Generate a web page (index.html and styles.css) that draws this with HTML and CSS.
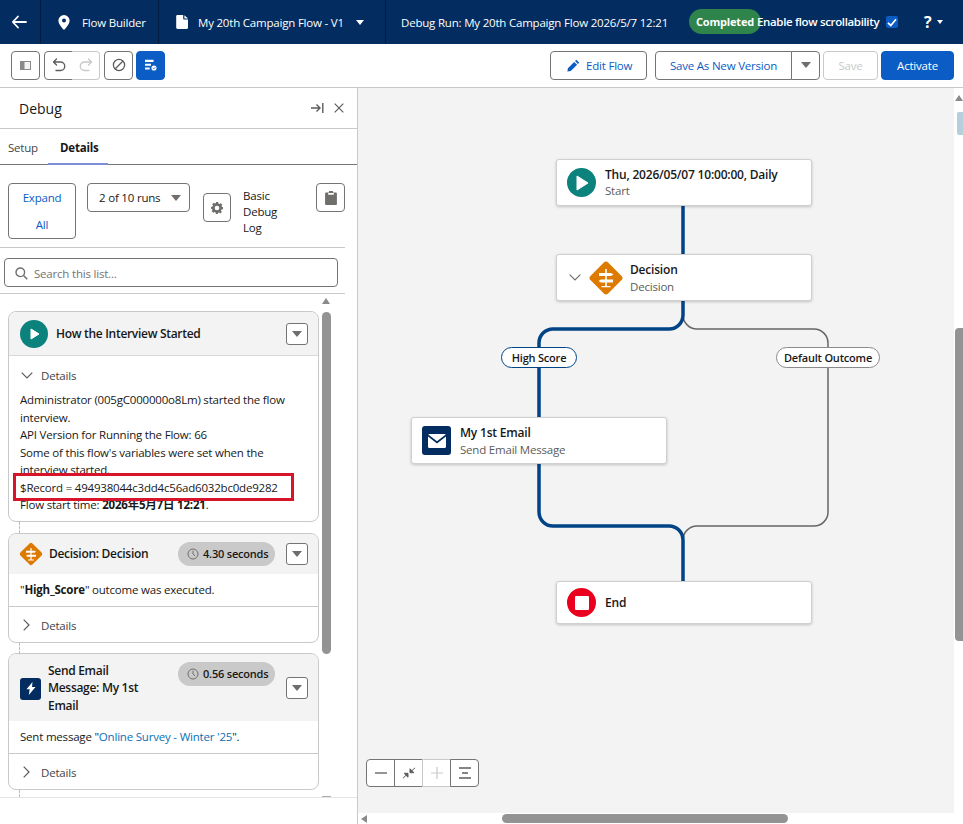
FILE: index.html
```html
<!DOCTYPE html>
<html lang="en">
<head>
    <meta charset="UTF-8">
    <title>Flow Builder - Debug Run</title>
    <link rel="stylesheet" href="styles.css">
</head>
<body>
    <header class="topbar">
        <a class="top-back">
            <svg width="16" height="14" viewBox="0 0 16 14"><path d="M7 1.5 1.8 7 7 12.5M2 7h13" fill="none" stroke="#fff" stroke-width="1.8" stroke-linecap="round" stroke-linejoin="round"/></svg>
        </a>
        <div class="top-app">
            <svg width="12" height="15" viewBox="0 0 12 15"><path fill-rule="evenodd" d="M6 0a5.600 5.600 0 0 1 5.600 5.600C11.600 9.400 7.500 13.600 6 15 4.500 13.600.4 9.400.4 5.600A5.600 5.600 0 0 1 6 0Zm0 3.600a2 2 0 1 0 0 4 2 2 0 0 0 0-4Z" fill="#fff"/></svg>
            <span>Flow Builder</span>
        </div>
        <div class="top-flow">
            <svg width="12" height="14" viewBox="0 0 12 14"><path d="M1.500 0h5.700v3.500c0 .6.500 1 1 1H12v8.300c0 .7-.6 1.200-1.200 1.200H1.500C.8 14 .2 13.500.2 12.800V1.200C.2.500.8 0 1.500 0ZM8.400.2 12 3.500H8.400Z" fill="#fff"/></svg>
            <span>My 20th Campaign Flow - V1</span>
            <i class="top-caret"></i>
        </div>
        <div class="top-run">Debug Run: My 20th Campaign Flow 2026/5/7 12:21</div>
        <div class="top-status">Completed</div>
        <div class="top-scroll">Enable flow scrollability</div>
        <span class="top-check">
            <svg width="10" height="9" viewBox="0 0 10 9"><path d="M1 4.800 3.800 7.500 9 1.200" fill="none" stroke="#fff" stroke-width="1.800"/></svg>
        </span>
        <span class="top-help">?</span>
        <i class="top-help-caret"></i>
    </header>

    <div class="toolbar">
        <button class="tool-btn">
            <svg width="11" height="9" viewBox="0 0 11 9"><rect x=".5" y=".5" width="10" height="8" fill="#f3f3f3" stroke="#8a8a8a"/><rect x="1" y="1" width="3.500" height="7" fill="#8a8a8a"/></svg>
        </button>
        <div class="tool-group">
            <button class="tool-btn">
                <svg width="14" height="14" viewBox="0 0 14 14"><path d="M4.500 1 1.500 4l3 3M2 4h6.500a4 4 0 0 1 0 8.500H4" fill="none" stroke="#5c5c5c" stroke-width="1.300" stroke-linecap="round" stroke-linejoin="round"/></svg>
            </button>
            <button class="tool-btn is-off">
                <svg width="14" height="14" viewBox="0 0 14 14"><path d="M9.500 1l3 3-3 3M12 4H5.500a4 4 0 0 0 0 8.500H10" fill="none" stroke="#c9c9c9" stroke-width="1.300" stroke-linecap="round" stroke-linejoin="round"/></svg>
            </button>
        </div>
        <button class="tool-btn tool-stop">
            <svg width="14" height="14" viewBox="0 0 14 14"><circle cx="7" cy="7" r="5.600" fill="none" stroke="#5c5c5c" stroke-width="1.300"/><path d="M3 11 11 3" stroke="#5c5c5c" stroke-width="1.300"/></svg>
        </button>
        <button class="tool-btn tool-debug">
            <svg width="12" height="12" viewBox="0 0 14 14"><path d="M0 1h10v2.400H0zM0 5.400h7v2.400H0zM0 9.800h5.500v2.400H0z" fill="#fff"/><circle cx="10.500" cy="10.500" r="3" fill="#fff"/><path d="m9 10.500 1.100 1.100 1.900-2" fill="none" stroke="#0b5cc4" stroke-width=".9"/></svg>
        </button>
        <div class="tool-spacer"></div>
        <button class="btn btn-edit">
            <svg width="13" height="13" viewBox="0 0 13 13"><path d="M9.300.8l2.900 2.900-1.300 1.300L8 2.100ZM7.200 2.900l2.900 2.900-6.300 6.300L.4 12.600.9 9.200Z" fill="#0b5cc4"/></svg>
            Edit Flow
        </button>
        <div class="save-group">
            <button class="btn btn-save-new">Save As New Version</button>
            <button class="btn btn-save-menu"><i class="caret"></i></button>
        </div>
        <button class="btn btn-save" disabled>Save</button>
        <button class="btn btn-activate">Activate</button>
    </div>

    <main class="workspace">
        <aside class="panel">
            <div class="panel-head">
                <span>Debug</span>
                <svg class="panel-pin" width="13" height="10" viewBox="0 0 13 10"><path d="M0 5h8M5.500 1.500 9 5 5.500 8.500M11.800 0v10" fill="none" stroke="#5c5c5c" stroke-width="1.400"/></svg>
                <svg class="panel-close" width="10" height="10" viewBox="0 0 10 10"><path d="M.7.700l8.600 8.600M9.300.7.700 9.300" stroke="#5c5c5c" stroke-width="1.200"/></svg>
            </div>
            <div class="tabs">
                <a class="tab">Setup</a>
                <a class="tab tab-active">Details</a>
            </div>
            <div class="controls">
                <button class="btn expand-btn">Expand<br>All</button>
                <div class="run-select">2 of 10 runs <i class="caret"></i></div>
                <button class="square-btn gear-btn">
                    <svg width="12" height="12" viewBox="0 0 12 12"><path fill-rule="evenodd" d="M4.900 0h2.200l.3 1.500 1.100.5 1.300-.8 1.500 1.500-.8 1.300.5 1.100L12 5v2.200l-1.500.3-.5 1.100.8 1.300-1.500 1.500-1.300-.8-1.100.5L6.900 12H4.900l-.3-1.500-1.100-.5-1.300.8L.7 9.300l.8-1.300L1 6.900 0 6.700V4.900l1.500-.3.500-1.100-.8-1.300L2.700.7 4 1.500l1.100-.5ZM6 3.700a2.300 2.300 0 1 0 0 4.600 2.300 2.300 0 0 0 0-4.600Z" fill="#706e6b"/></svg>
                </button>
                <div class="log-level">Basic Debug Log</div>
                <button class="square-btn clip-btn">
                    <svg width="12" height="14" viewBox="0 0 12 14"><path d="M4 0h4v1.500h2.800c.6 0 1.100.5 1.100 1.100v10.300c0 .6-.5 1.100-1.100 1.100H1.200c-.6 0-1.100-.5-1.100-1.100V2.600c0-.6.500-1.100 1.100-1.100H4ZM3.200 2v1.700h5.600V2Z" fill="#706e6b"/></svg>
                </button>
            </div>
            <div class="search-row">
                <div class="search-box">
                    <svg width="13" height="13" viewBox="0 0 13 13"><circle cx="5.300" cy="5.300" r="4.300" fill="none" stroke="#706e6b" stroke-width="1.400"/><path d="m8.500 8.500 3.800 3.800" stroke="#706e6b" stroke-width="1.500"/></svg>
                    <span>Search this list...</span>
                </div>
            </div>
            <div class="log-list">
                <div class="scroll-up"></div>
                <div class="scroll-thumb"></div>
                <div class="scroll-down"></div>

                <section class="card card-first">
                    <div class="card-head card-head-first">
                        <span class="icon-start">
                            <svg width="10" height="12" viewBox="0 0 10 12"><path d="M1 1v10l8-5Z" fill="#fff" stroke="#fff" stroke-linejoin="round"/></svg>
                        </span>
                        <h3>How the Interview Started</h3>
                        <button class="menu-btn"><i class="caret"></i></button>
                    </div>
                    <div class="details-row details-open">
                        <svg width="12" height="7" viewBox="0 0 12 7"><path d="M.7.700 6 6 11.300.7" fill="none" stroke="#5c5c5c" stroke-width="1.200"/></svg>
                        Details
                    </div>
                    <div class="card-text card-text-first">
                        Administrator (005gC000000o8Lm) started the flow interview.<br>
                        API Version for Running the Flow: 66<br>
                        Some of this flow's variables were set when the interview started.<br>
                        $Record = 494938044c3dd4c56ad6032bc0de9282<br>
                        Flow start time: <b>2026年5月7日 12:21</b>.
                    </div>
                    <div class="record-mark"></div>
                </section>

                <section class="card">
                    <div class="card-head card-head-decision">
                        <svg class="icon-decision" width="26" height="26" viewBox="0 0 26 26"><rect x="4.500" y="4.500" width="17" height="17" rx="2" transform="rotate(45 13 13)" fill="#dd7a01"/><path d="M12.400 7h1.200v12h-1.200z" fill="#fff"/><path d="M8 9.800h8.500l1.500 1-1.500 1H8zM18 13.800H9.500l-1.500 1 1.500 1H18zM10 18.500h6v1h-6z" fill="#fff"/></svg>
                        <h3>Decision: Decision</h3>
                        <span class="pill">
                            <svg width="12" height="12" viewBox="0 0 12 12"><circle cx="6" cy="6" r="5" fill="none" stroke="#706e6b" stroke-width="1"/><path d="M6 2.800V6l2 2" fill="none" stroke="#706e6b"/></svg>
                            4.30 seconds
                        </span>
                        <button class="menu-btn"><i class="caret"></i></button>
                    </div>
                    <div class="card-text card-line">"<b>High_Score</b>" outcome was executed.</div>
                    <div class="details-row details-closed">
                        <svg width="7" height="12" viewBox="0 0 7 12"><path d="M.7.700 6 6 .7 11.300" fill="none" stroke="#5c5c5c" stroke-width="1.200"/></svg>
                        Details
                    </div>
                </section>

                <section class="card">
                    <div class="card-head card-head-email">
                        <span class="icon-action">
                            <svg width="10" height="13" viewBox="0 0 10 13"><path d="M6.500 0 .5 7.300h3.200L2.800 13 9.500 5H6Z" fill="#fff"/></svg>
                        </span>
                        <h3>Send Email Message: My 1st Email</h3>
                        <span class="pill pill-top">
                            <svg width="12" height="12" viewBox="0 0 12 12"><circle cx="6" cy="6" r="5" fill="none" stroke="#706e6b" stroke-width="1"/><path d="M6 2.800V6l2 2" fill="none" stroke="#706e6b"/></svg>
                            0.56 seconds
                        </span>
                        <button class="menu-btn"><i class="caret"></i></button>
                    </div>
                    <div class="card-text card-line">Sent message "<a class="msg-link">Online Survey - Winter '25</a>".</div>
                    <div class="details-row details-closed">
                        <svg width="7" height="12" viewBox="0 0 7 12"><path d="M.7.700 6 6 .7 11.300" fill="none" stroke="#5c5c5c" stroke-width="1.200"/></svg>
                        Details
                    </div>
                </section>
                <i class="dash dash-1"></i>
                <i class="dash dash-2"></i>
                <i class="dash dash-3"></i>
            </div>
        </aside>

        <div class="canvas">
            <!-- connectors, in canvas coordinates -->
            <svg class="wires" width="605" height="736" viewBox="0 0 605 736">
                <path class="wire-off" d="M325 227A14 14 0 0 0 339 241H456A14 14 0 0 1 470 255V424A14 14 0 0 1 456 438H339A14 14 0 0 0 325 452"/>
                <path class="wire-on" d="M325 118V227A14 14 0 0 1 311 241H195A14 14 0 0 0 181 255V424A14 14 0 0 0 195 438H311A14 14 0 0 1 325 452V493"/>
            </svg>

            <div class="node node-start">
                <span class="node-round node-green">
                    <svg width="13" height="16" viewBox="0 0 13 16"><path d="M1 1v14l11-7Z" fill="#fff" stroke="#fff" stroke-linejoin="round"/></svg>
                </span>
                <div><b>Thu, 2026/05/07 10:00:00, Daily</b><small>Start</small></div>
            </div>
            <div class="node node-decision">
                <svg class="node-chevron" width="12" height="7" viewBox="0 0 12 7"><path d="M.7.700 6 6 11.300.7" fill="none" stroke="#706e6b" stroke-width="1.200"/></svg>
                <svg class="node-diamond" width="36" height="36" viewBox="0 0 36 36"><rect x="5.500" y="5.500" width="25" height="25" rx="3" transform="rotate(45 18 18)" fill="#dd7a01"/><path d="M17.200 9h1.600v17h-1.600z" fill="#fff"/><path d="M11 13h12l2.500 1.500L23 16H11zM25 19.500H13L10.500 21l2.500 1.500h12zM13.500 26h9v1.200h-9z" fill="#fff"/></svg>
                <div><b>Decision</b><small>Decision</small></div>
            </div>
            <div class="branch branch-high">High Score</div>
            <div class="branch branch-default">Default Outcome</div>
            <div class="node node-email">
                <span class="node-square">
                    <svg width="18" height="14" viewBox="0 0 18 14"><path d="M1.300 0h15.400c.5 0 .9.200 1 .6L9 7.300.3.600c.1-.4.500-.6 1-.6ZM0 2.500 9 9.500l9-7v10c0 .8-.6 1.500-1.300 1.500H1.300C.6 14 0 13.300 0 12.500Z" fill="#fff"/></svg>
                </span>
                <div><b>My 1st Email</b><small>Send Email Message</small></div>
            </div>
            <div class="node node-end">
                <span class="node-round node-red"><i></i></span>
                <div><b>End</b></div>
            </div>

            <div class="zoom-bar">
                <button><svg width="12" height="2" viewBox="0 0 12 2"><path d="M0 1h12" stroke="#5c5c5c" stroke-width="1.300"/></svg></button>
                <button><svg width="12" height="12" viewBox="0 0 12 12"><path d="M12 .8 8.200 4.400M7 1.800v3.900h3.900z" stroke="#5c5c5c" fill="#5c5c5c"/><path d="M0 11.200 3.800 7.600M5 10.200V6.300H1.100z" stroke="#5c5c5c" fill="#5c5c5c"/></svg></button>
                <button class="is-off"><svg width="12" height="12" viewBox="0 0 12 12"><path d="M0 6h12M6 0v12" stroke="#c9c9c9" stroke-width="1.200"/></svg></button>
                <button><svg width="12" height="12" viewBox="0 0 12 12"><path d="M0 1h12M3 6h6M0 11h12" stroke="#5c5c5c" stroke-width="1.400"/></svg></button>
            </div>

            <div class="v-scroll">
                <i class="v-arrow"></i>
                <i class="v-mini"></i>
                <i class="v-thumb"></i>
            </div>
            <div class="h-scroll">
                <i class="h-arrow"></i>
                <i class="h-thumb"></i>
            </div>
            <div class="splitter">
                <svg width="8" height="13" viewBox="0 0 8 13"><path d="M0 0h2v2H0zM3 0h2v2H3zM6 0h2v2H6zM0 3.600h2v2H0zM3 3.600h2v2H3zM6 3.600h2v2H6zM0 7.200h2v2H0zM3 7.200h2v2H3zM6 7.200h2v2H6zM0 10.800h2v2H0zM3 10.800h2v2H3zM6 10.800h2v2H6z" fill="#aeaeae"/></svg>
            </div>
        </div>
    </main>
</body>
</html>
```

FILE: styles.css
```css
* {
    box-sizing: border-box;
}
html, body {
    height: 824px;
    overflow: hidden;
}
body {
    margin: 0;
    font-family: "Open Sans", "Noto Sans CJK JP", sans-serif;
    font-size: 11.5px;
    letter-spacing: -0.2px;
    color: #181818;
    background: white;
}
button {
    font: inherit;
    letter-spacing: inherit;
    padding: 0;
    background: white;
    cursor: pointer;
}
i {
    display: block;
}
h3 {
    margin: 0;
    font-size: 12px;
    font-weight: 600;
    line-height: 17.5px;
    letter-spacing: -0.3px;
}
.caret {
    width: 0;
    height: 0;
    border-left: 5px solid transparent;
    border-right: 5px solid transparent;
    border-top: 6px solid #706e6b;
}

/* top bar */
.topbar {
    display: flex;
    align-items: center;
    height: 44px;
    background: #032d60;
    color: white;
}
.topbar > div, .top-back {
    display: flex;
    align-items: center;
    height: 44px;
}
.top-back {
    width: 41px;
    padding-left: 11px;
    border-right: 1px solid #011c40;
}
.top-app {
    width: 118px;
    padding-left: 17px;
    gap: 12px;
    border-right: 1px solid #011c40;
}
.top-flow {
    width: 227px;
    padding-left: 17px;
    gap: 10px;
    border-right: 1px solid #011c40;
}
.top-caret {
    margin-left: 2px;
    border-left: 4.5px solid transparent;
    border-right: 4.5px solid transparent;
    border-top: 5px solid white;
}
.topbar > .top-run {
    width: 303px;
    padding-left: 15px;
}
.topbar > .top-status {
    width: 72px;
    height: 25px;
    margin-top: -1px;
    justify-content: center;
    background: #2e844a;
    border-radius: 13px;
    font-weight: 700;
    font-size: 11px;
}
.topbar > .top-scroll {
    width: 121px;
    margin-left: -4px;
    margin-top: -2px;
    font-weight: 600;
    letter-spacing: -0.35px;
    white-space: nowrap;
}
.top-check {
    display: flex;
    align-items: center;
    justify-content: center;
    width: 12px;
    height: 12px;
    margin-left: 8px;
    background: #0b5cc4;
    border-radius: 2px;
}
.top-help {
    margin-left: 26px;
    font-size: 16px;
    font-weight: 700;
}
.top-help-caret {
    margin-left: 6px;
    border-left: 3px solid transparent;
    border-right: 3px solid transparent;
    border-top: 4px solid white;
}

/* toolbar */
.toolbar {
    display: flex;
    align-items: center;
    height: 44px;
    padding: 0 9px 1px 11px;
    border-bottom: 1px solid #c9c9c9;
}
.tool-btn {
    display: flex;
    align-items: center;
    justify-content: center;
    width: 29px;
    height: 29px;
    border: 1px solid #747474;
    border-radius: 4px;
}
.tool-group {
    display: flex;
    margin-left: 4px;
}
.tool-group .tool-btn:first-child {
    border-radius: 4px 0 0 4px;
}
.tool-group .tool-btn:last-child {
    width: 28px;
    margin-left: -1px;
    border-radius: 0 4px 4px 0;
}
.tool-btn.is-off {
    border-color: #c9c9c9;
    border-left: 0;
}
.tool-stop {
    margin-left: 4px;
}
.tool-debug {
    margin-left: 3px;
    background: #0b5cc4;
    border-color: #0b5cc4;
}
.tool-spacer {
    flex: 1;
}
.btn {
    height: 29px;
    border: 1px solid #747474;
    border-radius: 4px;
    color: #0b5cc4;
    background: white;
}
.btn-edit {
    display: flex;
    align-items: center;
    gap: 6px;
    width: 97px;
    padding-left: 16px;
}
.save-group {
    display: flex;
    margin-left: 8px;
}
.btn-save-new {
    width: 137px;
    border-radius: 4px 0 0 4px;
}
.btn-save-menu {
    display: flex;
    align-items: center;
    justify-content: center;
    width: 29px;
    margin-left: -1px;
    border-radius: 0 4px 4px 0;
}
.btn-save {
    width: 55px;
    margin-left: 3px;
    border-color: #c9c9c9;
    color: #c9c9c9;
}
.btn-activate {
    width: 73px;
    margin-left: 3px;
    background: #0b5cc4;
    border-color: #0b5cc4;
    color: white;
}

/* layout */
.workspace {
    display: flex;
    height: 736px;
}

/* left panel */
.panel {
    width: 358px;
    height: 736px;
    border-right: 1px solid #c9c9c9;
    background: white;
}
.panel-head {
    display: flex;
    align-items: center;
    height: 41px;
    padding: 0 13px 0 19px;
    border-bottom: 1px solid #c9c9c9;
    font-size: 14px;
    letter-spacing: 0;
}
.panel-head span {
    flex: 1;
}
.panel-close {
    margin-left: 10px;
}
.tabs {
    display: flex;
    height: 36px;
    border-bottom: 1px solid #747474;
}
.tab {
    padding: 11px 0 0 8px;
    width: 48px;
    color: #444;
}
.tab-active {
    width: 60px;
    padding-left: 12px;
    margin-bottom: -1px;
    font-weight: 700;
    color: #181818;
    border-bottom: 2px solid #7f8ed8;
}
.controls {
    display: flex;
    align-items: flex-start;
    height: 83px;
    margin-right: 12px;
    padding: 18px 0 0 8px;
    border-bottom: 1px solid #c9c9c9;
}
.expand-btn {
    width: 68px;
    height: 56px;
    line-height: 27px;
}
.run-select {
    display: flex;
    align-items: center;
    justify-content: space-between;
    width: 103px;
    height: 29px;
    margin-left: 11px;
    padding: 0 8px 0 11px;
    border: 1px solid #747474;
    border-radius: 4px;
}
.square-btn {
    display: flex;
    align-items: center;
    justify-content: center;
    width: 28px;
    height: 29px;
    border: 1px solid #747474;
    border-radius: 4px;
}
.gear-btn {
    margin: 10px 0 0 13px;
}
.log-level {
    width: 73px;
    margin: 5px 0 0 12px;
    padding-right: 30px;
    line-height: 16px;
}
.clip-btn {
    width: 29px;
}
.search-row {
    height: 46px;
    margin-right: 12px;
    padding: 10px 7px 0 4px;
    border-bottom: 1px solid #c9c9c9;
}
.search-box {
    display: flex;
    align-items: center;
    gap: 6px;
    height: 29px;
    padding: 1px 0 0 10px;
    border: 1px solid #747474;
    border-radius: 4px;
    color: #747474;
}
.log-list {
    position: relative;
    height: 504px;
    padding: 17px 0 0 8px;
    border-bottom: 1px solid #e5e5e5;
    overflow: hidden;
}
.scroll-up {
    position: absolute;
    top: 4px;
    left: 322px;
    border-left: 4.500px solid transparent;
    border-right: 4.500px solid transparent;
    border-bottom: 6px solid #8a8a8a;
}
.scroll-thumb {
    position: absolute;
    top: 18px;
    left: 322px;
    width: 9px;
    height: 342px;
    border-radius: 5px;
    background: #939393;
}
.scroll-down {
    position: absolute;
    bottom: 0;
    left: 322px;
    width: 9px;
    height: 1px;
    background: #aeaeae;
}
.card {
    position: relative;
    width: 311px;
    margin-bottom: 10px;
    border: 1px solid #c9c9c9;
    border-radius: 8px;
    overflow: hidden;
}
.card-first {
    margin-bottom: 11px;
    overflow: visible;
}
.card-head {
    position: relative;
    display: flex;
    align-items: center;
    background: #f3f3f3;
}
.card-head-first {
    height: 44px;
    padding-left: 11px;
    border-bottom: 1px solid #d8d8d8;
    border-radius: 8px 8px 0 0;
}
.card-head-first h3 {
    margin-left: 8px;
}
.card-head-decision {
    height: 40px;
    padding-left: 9px;
}
.card-head-decision h3 {
    margin-left: 5px;
}
.card-head-email {
    height: 67px;
    padding-left: 11px;
}
.card-head-email h3 {
    width: 105px;
    margin-left: 7px;
    padding-top: 2px;
}
.icon-start {
    display: flex;
    align-items: center;
    justify-content: center;
    width: 28px;
    height: 28px;
    padding-left: 1px;
    border-radius: 50%;
    background: #0b827c;
}
.icon-action {
    display: flex;
    align-items: center;
    justify-content: center;
    flex: none;
    width: 21px;
    height: 22px;
    margin-top: 3px;
    border-radius: 3px;
    background: #032d60;
}
.menu-btn {
    position: absolute;
    right: 10px;
    top: 11px;
    display: flex;
    align-items: center;
    justify-content: center;
    width: 22px;
    height: 22px;
    border: 1px solid #747474;
    border-radius: 3px;
}
.card-head-decision .menu-btn {
    top: 9px;
}
.card-head-email .menu-btn {
    top: 23px;
}
.pill {
    position: absolute;
    left: 169px;
    top: 8px;
    display: flex;
    align-items: center;
    gap: 4px;
    width: 97px;
    height: 24px;
    padding-left: 9px;
    border-radius: 12px;
    background: #c9c9c9;
    font-weight: 600;
    font-size: 11px;
    white-space: nowrap;
}
.details-row {
    display: flex;
    align-items: center;
    color: #444;
}
.details-row svg {
    flex: none;
}
.details-open {
    gap: 8px;
    height: 27px;
    padding: 11px 0 0 12px;
}
.details-closed {
    gap: 11px;
    height: 36px;
    padding: 2px 0 0 14px;
    border-top: 1px solid #c9c9c9;
}
.card-text {
    line-height: 17.500px;
    padding: 0 11px;
}
.card-text-first {
    padding: 8px 11px 7px;
}
.card-line {
    height: 32px;
    padding-top: 7px;
}
.msg-link {
    color: #0b6fb8;
}
.record-mark {
    position: absolute;
    left: 4px;
    top: 161px;
    width: 281px;
    height: 28px;
    border: 3px solid #d7142a;
}
.dash {
    position: absolute;
    left: 19px;
    width: 0;
    height: 11px;
    border-left: 1px dashed #bbb;
}
.dash-1 {
    top: 228px;
}
.dash-2 {
    top: 349px;
}
.dash-3 {
    top: 496px;
}

/* canvas */
.canvas {
    position: relative;
    flex: 1;
    background: #f3f3f3;
    overflow: hidden;
}
.wires {
    position: absolute;
    left: 0;
    top: 0;
}
.wires path {
    fill: none;
}
.wire-on {
    stroke: #014486;
    stroke-width: 3.5px;
}
.wire-off {
    stroke: #666;
    stroke-width: 1.500px;
}
.node {
    position: absolute;
    display: flex;
    align-items: center;
    width: 256px;
    height: 47px;
    border: 1px solid #d0d0d0;
    border-radius: 3px;
    background: white;
    box-shadow: 0 1px 3px rgba(0,0,0,0.2);
    padding-left: 10px;
}
.node b {
    display: block;
    font-size: 12px;
    font-weight: 600;
    line-height: 17px;
}
.node small {
    display: block;
    font-size: 11.5px;
    line-height: 17px;
    color: #5c5c5c;
}
.node-start {
    left: 198px;
    top: 71px;
    gap: 9px;
}
.node-start b, .node-start small {
    line-height: 16px;
}
.node-decision {
    left: 198px;
    top: 166px;
    padding-left: 12px;
}
.node-chevron {
    margin-right: 7px;
}
.node-diamond {
    margin-right: 6px;
}
.node-email {
    left: 53px;
    top: 329px;
    gap: 9px;
    padding-left: 10px;
}
.node-end {
    left: 198px;
    top: 493px;
    height: 43px;
    gap: 9px;
}
.node-round {
    display: flex;
    align-items: center;
    justify-content: center;
    flex: none;
    width: 29px;
    height: 29px;
    border-radius: 50%;
}
.node-green {
    background: #0b827c;
    padding-left: 2px;
}
.node-red {
    background: #ea001e;
}
.node-red i {
    width: 14px;
    height: 14px;
    border-radius: 1px;
    background: white;
}
.node-square {
    display: flex;
    align-items: center;
    justify-content: center;
    flex: none;
    width: 29px;
    height: 29px;
    border-radius: 3px;
    background: #032d60;
}
.branch {
    position: absolute;
    top: 259px;
    height: 21px;
    border: 1px solid #014486;
    border-radius: 11px;
    background: white;
    font-size: 11px;
    font-weight: 600;
    line-height: 19px;
    text-align: center;
}
.branch-high {
    left: 143px;
    width: 76px;
}
.branch-default {
    left: 418px;
    width: 104px;
    border-color: #8a8a8a;
}
.zoom-bar {
    position: absolute;
    left: 8px;
    top: 671px;
    display: flex;
}
.zoom-bar button {
    display: flex;
    align-items: center;
    justify-content: center;
    width: 29px;
    height: 28px;
    margin-right: -1px;
    border: 1px solid #747474;
}
.zoom-bar button:first-child {
    border-radius: 4px 0 0 4px;
}
.zoom-bar button:last-child {
    margin-right: 0;
    border-radius: 0 4px 4px 0;
}
.zoom-bar .is-off {
    border-color: #c9c9c9;
}
.v-scroll {
    position: absolute;
    right: 0;
    top: 0;
    width: 9px;
    height: 736px;
    background: white;
}
.v-arrow {
    position: absolute;
    top: 7px;
    left: 1px;
    border-left: 4px solid transparent;
    border-right: 4px solid transparent;
    border-bottom: 6px solid #8a8a8a;
}
.v-mini {
    position: absolute;
    top: 24px;
    left: 3px;
    width: 6px;
    height: 23px;
    background: #b5cfdc;
    border-radius: 2px 0 0 2px;
}
.v-thumb {
    position: absolute;
    top: 240px;
    left: 1px;
    width: 8px;
    height: 313px;
    border-radius: 4px 0 0 4px;
    background: #939393;
}
.h-scroll {
    position: absolute;
    left: 0;
    bottom: 0;
    width: 597px;
    height: 11px;
    background: white;
}
.h-arrow {
    position: absolute;
    left: 3px;
    top: 2px;
    border-top: 4px solid transparent;
    border-bottom: 4px solid transparent;
    border-right: 6px solid #8a8a8a;
}
.h-thumb {
    position: absolute;
    left: 144px;
    top: 1px;
    width: 286px;
    height: 9px;
    border-radius: 5px;
    background: #939393;
}
.splitter {
    position: absolute;
    left: -10px;
    top: 362px;
}
```
